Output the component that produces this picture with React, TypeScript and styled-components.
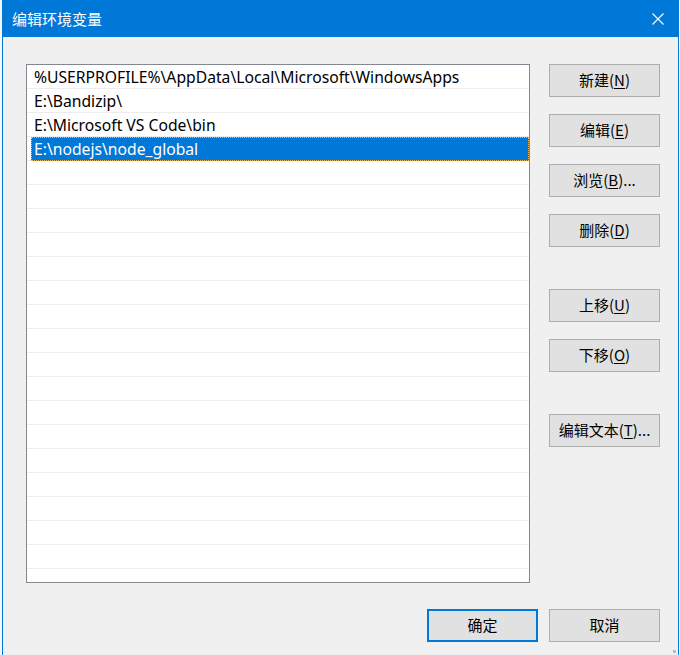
import React from "react";
import styled, { createGlobalStyle } from "styled-components";

const Global = createGlobalStyle`
  html, body { margin: 0; padding: 0; overflow: hidden; }
  body {
    background: #f6f6f6;
    font-family: "Noto Sans", "Noto Sans CJK SC", sans-serif;
    font-size: 15px;
    color: #000;
  }
`;

const Page = styled.div`
  display: flex;
  padding-left: 2px;
  height: 655px;
`;

const Window = styled.div`
  position: relative;
  width: 677px;
  height: 660px;
  box-sizing: border-box;
  border: 1px solid #0078d7;
  border-top: none;
  background: #f0f0f0;
  display: flex;
  flex-direction: column;
`;

const TitleBar = styled.div`
  height: 37px;
  background: #0078d7;
  display: flex;
  align-items: center;
  justify-content: space-between;
  padding: 0 14px 0 9px;
  color: #fff;
  font-family: "Noto Sans CJK SC", sans-serif;
  font-size: 15px;
  flex-shrink: 0;
`;

const Title = styled.span`
  line-height: 1;
  margin-top: -1px;
`;

const CloseIcon = styled.svg`
  width: 12px;
  height: 12px;
  display: block;
`;

const Body = styled.div`
  display: grid;
  grid-template-columns: 504px 111px;
  column-gap: 19px;
  padding: 27px 0 0 23px;
`;

const List = styled.div`
  width: 504px;
  height: 519px;
  box-sizing: border-box;
  border: 1px solid #828790;
  background: #fff;
  overflow: hidden;
`;

const Row = styled.div`
  height: 24px;
  display: flex;
  box-shadow: inset 0 -1px 0 #ececec;
`;

const Cell = styled.div<{ $selected?: boolean }>`
  flex: 1;
  margin-left: 4px;
  padding-left: 3px;
  display: flex;
  align-items: center;
  white-space: nowrap;
  font-family: "Noto Sans", "Noto Sans CJK SC", sans-serif;
  font-size: 15.7px;
  background: ${(p) => (p.$selected ? "#0078d7" : "transparent")};
  color: ${(p) => (p.$selected ? "#fff" : "#000")};
  outline: ${(p) => (p.$selected ? "1px dotted #f2b35c" : "none")};
  outline-offset: -1px;
`;

const SideButtons = styled.div`
  display: flex;
  flex-direction: column;
  gap: 17px;
`;

const Button = styled.button<{ $default?: boolean; $gapBefore?: boolean }>`
  width: 111px;
  height: 33px;
  box-sizing: border-box;
  background: #e1e1e1;
  border: ${(p) => (p.$default ? "2px solid #0078d7" : "1px solid #adadad")};
  margin: ${(p) => (p.$gapBefore ? "25px 0 0 0" : "0")};
  padding: 0 0 2px 0;
  font-family: "Noto Sans CJK SC", sans-serif;
  font-size: 15px;
  line-height: 1.2;
  color: #000;
  display: flex;
  align-items: center;
  justify-content: center;
  cursor: default;

  u {
    text-decoration: underline;
    text-underline-offset: 2px;
  }
`;

const Footer = styled.div`
  grid-column: 1 / span 2;
  display: flex;
  justify-content: flex-end;
  gap: 11px;
  margin-top: 26px;
`;

const Grip = styled.div`
  position: absolute;
  right: 2px;
  bottom: 6px;
  width: 3px;
  height: 3px;
  background: #bdbdbd;
`;

const paths = [
  "%USERPROFILE%\\AppData\\Local\\Microsoft\\WindowsApps",
  "E:\\Bandizip\\",
  "E:\\Microsoft VS Code\\bin",
  "E:\\nodejs\\node_global",
];

const TOTAL_ROWS = 22;

export default function App() {
  const rows = Array.from({ length: TOTAL_ROWS }, (_, i) => paths[i] ?? "");
  return (
    <>
      <Global />
      <Page>
        <Window>
          <TitleBar>
            <Title>编辑环境变量</Title>
            <CloseIcon viewBox="0 0 12 12">
              <path d="M0.5 0.5 L11.5 11.5 M11.5 0.5 L0.5 11.5" stroke="#fff" strokeWidth="1.1" fill="none" />
            </CloseIcon>
          </TitleBar>
          <Body>
            <List>
              {rows.map((text, i) => (
                <Row key={i}>
                  <Cell $selected={i === 3}>{text}</Cell>
                </Row>
              ))}
            </List>
            <SideButtons>
              <Button>新建(<u>N</u>)</Button>
              <Button>编辑(<u>E</u>)</Button>
              <Button>浏览(<u>B</u>)...</Button>
              <Button>删除(<u>D</u>)</Button>
              <Button $gapBefore>上移(<u>U</u>)</Button>
              <Button>下移(<u>O</u>)</Button>
              <Button $gapBefore>编辑文本(<u>T</u>)...</Button>
            </SideButtons>
            <Footer>
              <Button $default>确定</Button>
              <Button>取消</Button>
            </Footer>
          </Body>
          <Grip />
        </Window>
      </Page>
    </>
  );
}
